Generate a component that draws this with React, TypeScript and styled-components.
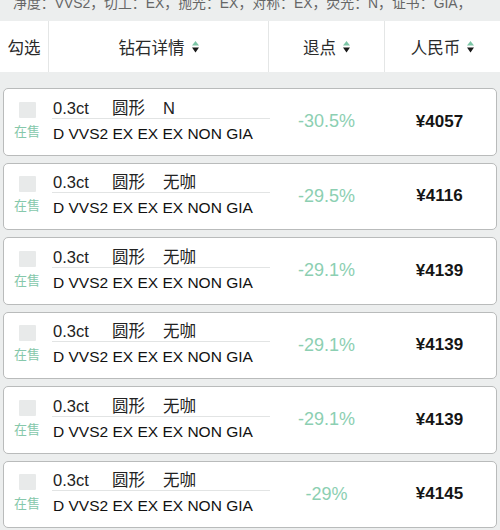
import React from "react";
import styled, { createGlobalStyle } from "styled-components";

const Global = createGlobalStyle`
  html, body { margin: 0; padding: 0; background: #eceeee; }
  body { font-family: "Liberation Sans", "Noto Sans CJK SC", sans-serif; }
`;

const Page = styled.div`
  width: 500px;
  height: 530px;
  overflow: hidden;
  background: #eceeee;
`;

const TopInfo = styled.div`
  height: 21px;
  overflow: hidden;
  padding: 0 0 0 13px;
`;

const TopText = styled.div`
  margin-top: -4px;
  font-size: 13.9px;
  line-height: 14px;
  color: #666;
  white-space: nowrap;
`;

const Header = styled.div`
  display: grid;
  grid-template-columns: 49px 220px 116px 1fr;
  height: 51px;
  background: #fff;
`;

const HeadCell = styled.div<{ $last?: boolean }>`
  display: flex;
  align-items: center;
  justify-content: center;
  gap: 7px;
  font-size: 16.5px;
  color: #2a2a2a;
  border-right: ${(p) => (p.$last ? "none" : "1px solid #e4e6e6")};
`;

const List = styled.div`
  display: flex;
  flex-direction: column;
  gap: 7px;
  padding: 16px 3px 0;
`;

const Card = styled.div`
  box-sizing: border-box;
  height: 67.5px;
  background: #fff;
  border: 1px solid #b9bbbb;
  border-radius: 5px;
  display: grid;
  grid-template-columns: 46px 220px 115px 1fr;
  align-items: center;
`;

const CheckCol = styled.div`
  align-self: stretch;
  display: flex;
  flex-direction: column;
  align-items: center;
  padding-top: 12.5px;
  gap: 6px;
`;

const CheckBox = styled.div`
  width: 17px;
  height: 16px;
  background: #e8eaea;
  border-radius: 1px;
`;

const Status = styled.div`
  font-size: 13px;
  line-height: 16px;
  color: #86c8ab;
`;

const Detail = styled.div`
  padding-left: 3px;
  padding-bottom: 2px;
`;

const SpecRow = styled.div`
  display: grid;
  grid-template-columns: 59px 51px auto;
  font-size: 16.5px;
  line-height: 20px;
  color: #222;
  white-space: nowrap;
`;

const Divider = styled.div`
  height: 1px;
  width: 218px;
  margin-left: -1px;
  background: #e2e4e4;
  margin-bottom: 5px;
`;

const GradeRow = styled.div`
  font-size: 15.5px;
  line-height: 20px;
  color: #111;
  white-space: nowrap;
`;

const Percent = styled.div`
  text-align: center;
  font-size: 18px;
  color: #8ccfb2;
  padding-right: 2px;
`;

const Price = styled.div`
  text-align: center;
  font-size: 17px;
  font-weight: 700;
  color: #151515;
  padding-right: 2px;
`;

const SortIcon = () => (
  <svg width="7" height="12" viewBox="0 0 7 12">
    <path d="M3.5 0 L7 4.5 L0 4.5 Z" fill="#7cc5a6" />
    <path d="M0 6.5 L7 6.5 L3.5 11.5 Z" fill="#1a1a1a" />
  </svg>
);

const rows = [
  { color: "N", pct: "-30.5%", price: "¥4057" },
  { color: "无咖", pct: "-29.5%", price: "¥4116" },
  { color: "无咖", pct: "-29.1%", price: "¥4139" },
  { color: "无咖", pct: "-29.1%", price: "¥4139" },
  { color: "无咖", pct: "-29.1%", price: "¥4139" },
  { color: "无咖", pct: "-29%", price: "¥4145" },
];

export default function App() {
  return (
    <Page>
      <Global />
      <TopInfo>
        <TopText>净度：VVS2，切工：EX，抛光：EX，对称：EX，荧光：N，证书：GIA，</TopText>
      </TopInfo>
      <Header>
        <HeadCell>勾选</HeadCell>
        <HeadCell>
          钻石详情
          <SortIcon />
        </HeadCell>
        <HeadCell>
          退点
          <SortIcon />
        </HeadCell>
        <HeadCell $last>
          人民币
          <SortIcon />
        </HeadCell>
      </Header>
      <List>
        {rows.map((r, i) => (
          <Card key={i}>
            <CheckCol>
              <CheckBox />
              <Status>在售</Status>
            </CheckCol>
            <Detail>
              <SpecRow>
                <span>0.3ct</span>
                <span>圆形</span>
                <span>{r.color}</span>
              </SpecRow>
              <Divider />
              <GradeRow>D VVS2 EX EX EX NON GIA</GradeRow>
            </Detail>
            <Percent>{r.pct}</Percent>
            <Price>{r.price}</Price>
          </Card>
        ))}
      </List>
    </Page>
  );
}
